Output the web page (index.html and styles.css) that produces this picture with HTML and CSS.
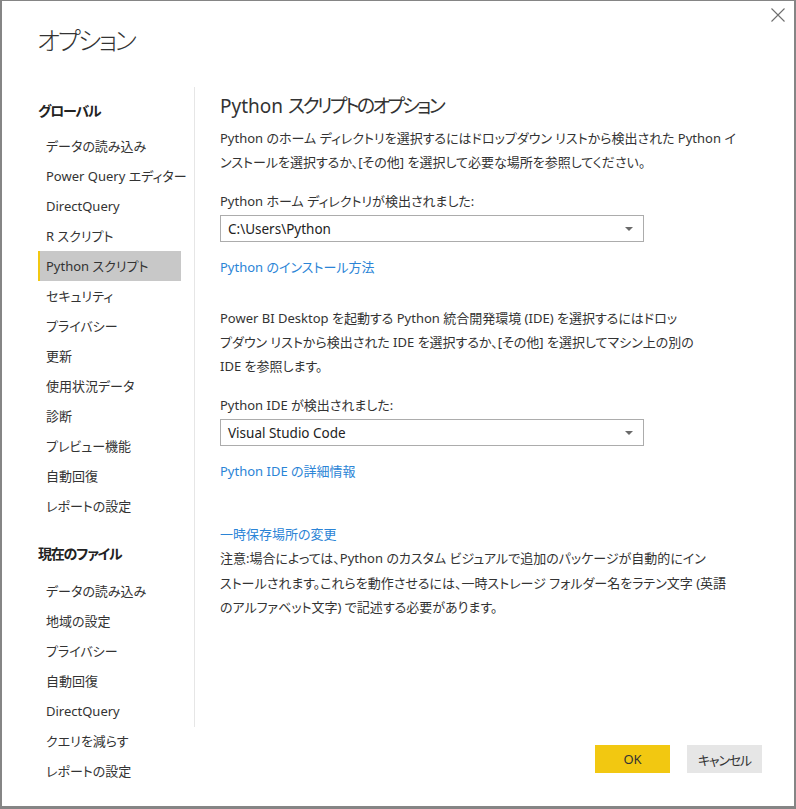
FILE: index.html
```html
<!DOCTYPE html>
<html lang="ja">
<head>
<meta charset="utf-8">
<title>オプション</title>
<link rel="stylesheet" href="styles.css">
</head>
<body>
<div class="window">
  <button class="close" aria-label="閉じる">
    <svg width="14" height="14" viewBox="0 0 14 14"><path d="M0.5 0.5 L13.5 13.5 M13.5 0.5 L0.5 13.5" stroke="#6e6e6e" stroke-width="1.1" fill="none"/></svg>
  </button>
  <h1 class="title">オプション</h1>
  <div class="main">
    <nav class="sidebar">
      <div class="group-title">グローバル</div>
      <ul class="nav-list">
        <li class="nav-item">データの読み込み</li>
        <li class="nav-item">Power Query エディター</li>
        <li class="nav-item">DirectQuery</li>
        <li class="nav-item">R スクリプト</li>
        <li class="nav-item active">Python スクリプト</li>
        <li class="nav-item">セキュリティ</li>
        <li class="nav-item">プライバシー</li>
        <li class="nav-item">更新</li>
        <li class="nav-item">使用状況データ</li>
        <li class="nav-item">診断</li>
        <li class="nav-item">プレビュー機能</li>
        <li class="nav-item">自動回復</li>
        <li class="nav-item">レポートの設定</li>
      </ul>
      <div class="group-title second">現在のファイル</div>
      <ul class="nav-list second-list">
        <li class="nav-item">データの読み込み</li>
        <li class="nav-item">地域の設定</li>
        <li class="nav-item">プライバシー</li>
        <li class="nav-item">自動回復</li>
        <li class="nav-item">DirectQuery</li>
        <li class="nav-item">クエリを減らす</li>
        <li class="nav-item">レポートの設定</li>
      </ul>
    </nav>
    <section class="content">
      <h2 class="section-title">Python <span class="jp">スクリプトのオプション</span></h2>
      <p class="para first">Python のホーム ディレクトリを選択するにはドロップダウン リストから検出された Python イ<br>ンストールを選択するか、[その他] を選択して必要な場所を参照してください。</p>
      <div class="label">Python ホーム ディレクトリが検出されました:</div>
      <div class="select"><span>C:\Users\Python</span><i class="arrow"></i></div>
      <a class="link" href="#">Python のインストール方法</a>
      <p class="para second">Power BI Desktop を起動する Python 統合開発環境 (IDE) を選択するにはドロッ<br>プダウン リストから検出された IDE を選択するか、[その他] を選択してマシン上の別の<br>IDE を参照します。</p>
      <div class="label">Python IDE が検出されました:</div>
      <div class="select"><span>Visual Studio Code</span><i class="arrow"></i></div>
      <a class="link" href="#">Python IDE の詳細情報</a>
      <a class="link temp" href="#">一時保存場所の変更</a>
      <p class="para note">注意:場合によっては、Python のカスタム ビジュアルで追加のパッケージが自動的にイン<br>ストールされます。これらを動作させるには、一時ストレージ フォルダー名をラテン文字 (英語<br>のアルファベット文字) で記述する必要があります。</p>
    </section>
  </div>
  <div class="footer">
    <button class="btn ok">OK</button>
    <button class="btn cancel">キャンセル</button>
  </div>
</div>
</body>
</html>
```
FILE: styles.css
```css
* { box-sizing: border-box; }
html, body { margin: 0; padding: 0; background: #fff; }
body {
  font-family: "Noto Sans", "Noto Sans CJK JP", sans-serif;
  font-size: 13px;
  color: #333;
  font-feature-settings: "palt";
}
.window {
  position: relative;
  width: 796px;
  height: 809px;
  border-style: solid;
  border-color: #858585;
  border-width: 1px 2px 3px 2px;
  background: #fff;
}
.close {
  position: absolute;
  top: 7px;
  right: 9px;
  width: 14px;
  height: 14px;
  padding: 0;
  border: 0;
  background: none;
  display: block;
}
.close svg { display: block; }
.title {
  margin: 0;
  padding: 21px 0 0 35px;
  height: 86px;
  font-size: 25px;
  font-weight: 300;
  line-height: 36px;
  letter-spacing: -2.5px;
  color: #333;
}
.main {
  display: flex;
  height: 640px;
}
.sidebar {
  width: 192px;
  flex: none;
  padding: 9px 13px 0 36px;
}
.group-title {
  font-weight: 700;
  font-size: 14px;
  line-height: 30px;
  letter-spacing: -1.2px;
  color: #222;
}
.group-title.second { margin-top: 18px; }
.nav-list {
  list-style: none;
  margin: 5px 0 0 0;
  padding: 0;
}
.second-list { margin-top: 7px; }
.nav-item {
  height: 30px;
  line-height: 30px;
  padding-left: 8px;
  white-space: nowrap;
  color: #333;
}
.nav-item.active {
  background: #c8c8c8;
  border-left: 2px solid #f2c811;
  padding-left: 6px;
}
.content {
  flex: 1;
  border-left: 1px solid #e6e6e6;
  padding: 5px 0 0 25px;
  display: flex;
  flex-direction: column;
  align-items: flex-start;
}
.section-title {
  margin: 0;
  font-size: 19px;
  font-weight: 400;
  line-height: 28px;
  color: #333;
}
.section-title .jp { letter-spacing: -2.6px; }
.para {
  margin: 6px 0 0 0;
  line-height: 24px;
  white-space: nowrap;
}
.para.second { margin-top: 27px; }
.para.note { margin-top: 0; line-height: 24.5px; }
.label {
  margin-top: 15px;
  line-height: 24px;
}
.select {
  margin-top: 2px;
  width: 424px;
  height: 27px;
  border: 1px solid #acacac;
  display: flex;
  align-items: center;
  justify-content: space-between;
  padding: 0 10px 0 7px;
  font-size: 13.5px;
  color: #222;
}
.arrow {
  width: 0;
  height: 0;
  border-left: 4px solid transparent;
  border-right: 4px solid transparent;
  border-top: 4px solid #6a6a6a;
}
.link {
  margin-top: 14px;
  line-height: 24px;
  color: #2b84d6;
  text-decoration: none;
}
.select + .link { margin-top: 13px; }
.link.temp { margin-top: 39px; }
.footer {
  display: flex;
  justify-content: flex-end;
  gap: 17px;
  padding: 18px 32px 0 0;
}
.btn {
  width: 75px;
  height: 28px;
  border: 0;
  font-family: "Noto Sans", "Noto Sans CJK JP", sans-serif;
  font-size: 13px;
  color: #333;
  font-feature-settings: "palt";
}
.btn.ok { background: #f2c811; }
.btn.cancel { background: #e6e6e6; letter-spacing: -1.2px; }
```
